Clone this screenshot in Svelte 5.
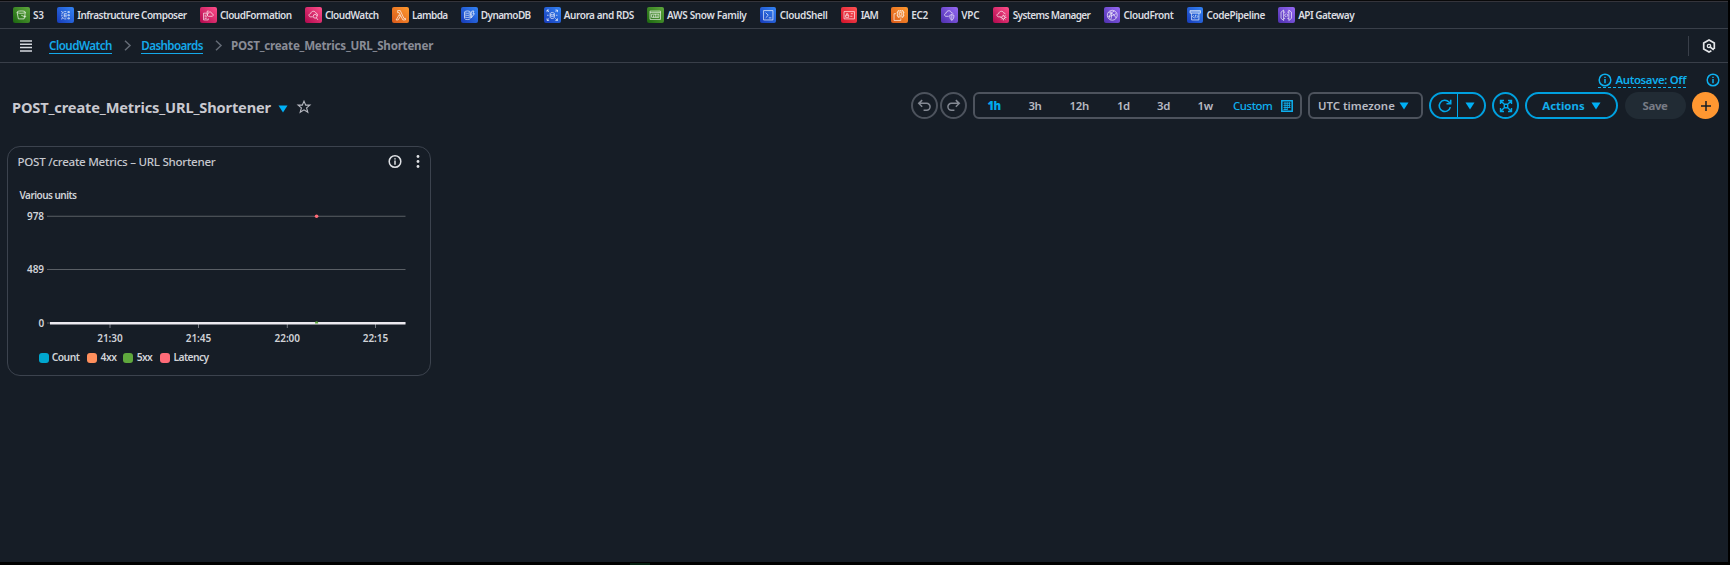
<script>
  const services = [
    ['S3', 11, 'green', 's3'],
    ['Infrastructure Composer', 109.4, 'blue', 'composer'],
    ['CloudFormation', 71.7, 'pink', 'formation'],
    ['CloudWatch', 53.7, 'pink', 'watch'],
    ['Lambda', 35.7, 'orange', 'lambda'],
    ['DynamoDB', 49.7, 'blue', 'dynamo'],
    ['Aurora and RDS', 70, 'blue', 'rds'],
    ['AWS Snow Family', 79.4, 'green', 'snow'],
    ['CloudShell', 47.7, 'blue', 'shell'],
    ['IAM', 17.2, 'red', 'iam'],
    ['EC2', 16.7, 'orange', 'ec2'],
    ['VPC', 18.2, 'purple', 'vpc'],
    ['Systems Manager', 77.7, 'pink', 'systems'],
    ['CloudFront', 49.7, 'purple', 'front'],
    ['CodePipeline', 58.3, 'blue', 'pipeline'],
    ['API Gateway', 56, 'purple', 'gateway']
  ];

  const glyphs = {
    s3: 'M4 6l2.5 13h11L20 6M4 6c0-3 16-3 16 0s-16 3-16 0M12 12l7 3c3 1 2-2 0-2',
    composer: 'M9 6H7v3M7 15v3h2M10 9v6h5M10 12h5M10 9h5M4 5h2M4 9h1M4 12h3M4 15h1M4 19h2M17 5h3v2h-3zM17 11h3v2h-3zM17 17h3v2h-3zM10 5h4M10 19h4',
    formation: 'M10 8H3v13h9v-3M5 12h3M5 15h5M5 18h4M10 13V4h3M12 14h8c3-2 1-5-1-5-1-5-7-4-7 0-3 1-2 4 0 5',
    watch: 'M11 15H6c-4-2-2-6 1-6 1-6 9-6 10-1 3 0 4 3 3 5M12 14a3.6 3.6 0 1 0 7.2 0a3.6 3.6 0 1 0-7.2 0M18 17l3 4',
    lambda: 'M7 3h5l7 15h3v3h-5L10 7H7zM10 11L4 21h4l4-7z',
    dynamo: 'M3 6c0-3 11-3 11 0s-11 3-11 0v12c0 3 11 3 11 0V6M3 10c0 3 11 3 11 0M3 14c0 3 11 3 11 0M17 4h4l-2 5h3l-6 8 1-6h-2z',
    rds: 'M8 9c0-3 8-3 8 0s-8 3-8 0v7c0 3 8 3 8 0V9M8 12c0 3 8 3 8 0M2 2l4 4M2 6V2h4M22 2l-4 4M18 2h4v4M2 22l4-4M2 18v4h4M22 22l-4-4M18 22h4v-4M2 12h3M19 12h3',
    snow: 'M2 4h20v16H2zM2 7h20M5 10h14v6H5zM12 10v6M8.5 12v4M15.5 12v4',
    shell: 'M3 3h18v18H3zM7 7l5 5-5 5M13 17h5',
    iam: 'M2 5h20v14H2zM5 12h6v4H5zM6.500 12V9h3v3M15 9h4M14 14h4',
    ec2: 'M9 4h11v11H9zM6 9H2v13h13v-4M12 7h5v5h-5zM11 2v2M14.500 2v2M18 2v2M20 7h2M20 12h2M11 15v2M18 15v2M7 7h2M7 12h2',
    vpc: 'M11 14H5c-4-2-1-6 1-6 1-6 9-6 10-1 2 0 3 1 3 2M13 12c2 0 3-1 4-2 1 1 2 2 4 2 0 5-1 8-4 10-3-2-4-5-4-10M17 11v10',
    systems: 'M11 15H6c-4-2-2-6 1-6 1-6 9-6 10-1 2 0 3 1 3 2M13 16a3 3 0 1 0 6 0a3 3 0 1 0-6 0M16 11v2M16 19v3M10 16h3M19 16h3M12 20l2-2M18 18l2 2M20 12l-2 2',
    front: 'M2.500 12a9.500 9.500 0 1 0 19 0a9.500 9.500 0 1 0-19 0M5 7c6 0 12 4 14 10M6 18c0-6 4-12 10-14M4 14c6 0 12-2 16-6M9 20c2-3 2-9 0-16',
    pipeline: 'M2 3h20v5H2zM5 8v13h14V8M2 5.500h20M9 12l-2 2.500L9 17M15 12l2 2.500L15 17M13 11l-2 7',
    gateway: 'M2 6l5-4v20l-5-4zM22 6l-5-4v20l5-4zM7 6h3M14 6h3M7 18h3M14 18h3M11 9l-2 3 2 3M13 9l2 3-2 3'
  };

  const ranges = [
    ['3h', 13, 28],
    ['12h', 19.5, 28],
    ['1d', 12.5, 27.5],
    ['3d', 13, 27.5],
    ['1w', 15.5, 20]
  ];

  const gridlines = [[978, 71.3, 17], [489, 124.5, 17], [0, 178, 5.5]];
  const ticks = [['21:30', 102], ['21:45', 190.5], ['22:00', 279.3], ['22:15', 367.5]];
  const legend = [
    ['Count', '#00a7cf', 27.5, 8],
    ['4xx', '#ff8f5c', 15.8, 7],
    ['5xx', '#5fa83d', 15.5, 8],
    ['Latency', '#ff6b78', 35, 0]
  ];

  // Spreads the letters so that a label fills its column exactly.
  function fit(node, width) {
    node.style.letterSpacing = '0px';
    const natural = node.getBoundingClientRect().width;
    node.style.letterSpacing = (width - natural) / node.textContent.length + 'px';
  }
</script>

{#snippet caret()}
  <svg class="caret" viewBox="0 0 10 8"><path d="M0.5 0.5h9L5 7.5z" fill="currentColor" /></svg>
{/snippet}

{#snippet info()}
  <svg class="info" viewBox="0 0 14 14" fill="none" stroke="currentColor" stroke-width="1.5">
    <circle cx="7" cy="7" r="5.8" /><path d="M7 6.1v4.1M7 3.7v1.4" />
  </svg>
{/snippet}

<div class="page">
  <nav class="services">
    {#each services as [name, width, tone, icon]}
      <div class="service">
        <span class="tile {tone}">
          <svg viewBox="0 0 24 24" fill="none" stroke="#fff" stroke-opacity="0.85" stroke-width="1.5"><path d={glyphs[icon]} /></svg>
        </span>
        <span class="label" style:width="{width}px"><span use:fit={width}>{name}</span></span>
      </div>
    {/each}
  </nav>

  <header class="crumbs">
    <svg class="menu" viewBox="0 0 12 12" stroke="#d5d9df" stroke-width="1.5"><path d="M0 1h12M0 4.3h12M0 7.600h12M0 10.900h12" /></svg>
    <a href="#cloudwatch"><span use:fit={63}>CloudWatch</span></a>
    <svg class="chevron" viewBox="0 0 7 11"><path d="M1 .7l5 4.8-5 4.8" /></svg>
    <a href="#dashboards"><span use:fit={61.5}>Dashboards</span></a>
    <svg class="chevron" viewBox="0 0 7 11"><path d="M1 .7l5 4.8-5 4.8" /></svg>
    <span class="current"><span use:fit={202}>POST_create_Metrics_URL_Shortener</span></span>
    <div class="corner">
      <svg viewBox="0 0 14 14" fill="none" stroke="#e3e5e8" stroke-width="1.7"><path d="M9.400 11.700L7 13 1.700 10V4L7 1l5.300 3v6M7.500 7.500l4.300 3.400" /><circle cx="7" cy="7" r="1.700" stroke-width="1.300" /></svg>
    </div>
  </header>

  <main>
    <section class="heading">
      <h1><span use:fit={259}>POST_create_Metrics_URL_Shortener</span></h1>
      <span class="cyan drop">{@render caret()}</span>
      <svg class="star" viewBox="0 0 14 14"><path d="M7 1.100l1.700 4h4.200L9.600 7.900l1.200 4.400L7 9.800l-3.800 2.500 1.200-4.400L1.100 5.100h4.200z" /></svg>
    </section>

    <section class="tools">
      <div class="autosave-row">
        <span class="autosave">{@render info()}<span use:fit={70.5}>Autosave: Off</span></span>
        {@render info()}
      </div>
      <div class="toolbar">
        <button class="round grey undo" aria-label="Undo">
          <svg viewBox="0 0 16 14"><path d="M5.500 1.200L1.800 4.700l3.700 3.600M2 4.700h8.300a3.700 3.700 0 0 1 0 7.400H7" /></svg>
        </button>
        <button class="round grey redo" aria-label="Redo">
          <svg viewBox="0 0 16 14"><path d="M10.500 1.200l3.700 3.500-3.700 3.600M14 4.700H5.700a3.700 3.700 0 0 0 0 7.400H9" /></svg>
        </button>
        <div class="segments">
          <b class="first"><span use:fit={13}>1h</span></b>
          {#each ranges as [text, width, gap]}
            <span class="range" style:width="{width}px" style:margin-right="{gap}px"><span use:fit={width}>{text}</span></span>
          {/each}
          <span class="custom"><span use:fit={39.5}>Custom</span></span>
          <svg class="calendar" viewBox="0 0 12 12"><path d="M.8.8h10.400v10.400H.8z" /><path d="M2.500 3.200h7M2.500 5.400h7M2.500 7.500h7M2.500 9.500h4M4 2.200v8M6.200 2.200v8M8.400 2.200v5.600" stroke-width="0.9" /></svg>
        </div>
        <button class="zone"><span use:fit={73}>UTC timezone</span>{@render caret()}</button>
        <div class="refresh">
          <svg class="reload" viewBox="0 0 14 14"><path d="M12.300 8.100A5.600 5.600 0 1 1 10.900 3l1.700 1.600M12.700.7v4.100H8.500" /></svg>
          <span class="split">{@render caret()}</span>
        </div>
        <button class="round expand" aria-label="Full screen">
          <svg viewBox="0 0 14 14"><path d="M1.500 5V1.500H5M9 1.500h3.500V5M12.500 9v3.500H9M5 12.500H1.500V9M1.700 1.700l3.800 3.800M12.300 1.700L8.500 5.500M12.300 12.300L8.500 8.500M1.700 12.300l3.800-3.800M5.300 5.300h3.400v3.400H5.300z" /></svg>
        </button>
        <button class="actions"><span use:fit={40.5}>Actions</span>{@render caret()}</button>
        <button class="save"><span use:fit={25}>Save</span></button>
        <button class="add" aria-label="Add widget">
          <svg viewBox="0 0 10 10"><path d="M5 0v10M0 5h10" /></svg>
        </button>
      </div>
    </section>

    <article class="widget">
      <div class="widget-head">
        <h2><span use:fit={198}>POST /create Metrics – URL Shortener</span></h2>
        {@render info()}
        <svg class="dots" viewBox="0 0 4 14" fill="#dfe1e5"><circle cx="2" cy="2" r="1.400" /><circle cx="2" cy="7" r="1.400" /><circle cx="2" cy="12" r="1.400" /></svg>
      </div>
      <svg class="chart" viewBox="0 32 424 170">
        <text x="11.500" y="53.500" textLength="57.500">Various units</text>
        {#each gridlines as [value, y, width]}
          <text x={36 - width} y={y + 3.700} textLength={width}>{value}</text>
          <line x1="39" x2="397.500" y1={y} y2={y} stroke="#5a5f65" stroke-width="1.100" />
        {/each}
        {#each ticks as [time, x]}
          <line x1={x} x2={x} y1="178" y2="183" stroke="#767b82" />
          <text x={x - 12.700} y="197" textLength="25.400">{time}</text>
        {/each}
        <line x1="42" x2="397.500" y1="178.300" y2="178.300" stroke="#eceaf0" stroke-width="2.500" />
        <circle cx="308.600" cy="71.300" r="1.800" fill="#ff6b78" />
        <path d="M307 178.400v-.5a1.600 1.600 0 0 1 3.200 0v.5z" fill="#5fa83d" />
      </svg>
      <div class="legend">
        {#each legend as [name, color, width, gap]}
          <span class="key" style:margin-right="{gap}px">
            <i style:background={color}></i><span style:width="{width}px"><span use:fit={width}>{name}</span></span>
          </span>
        {/each}
      </div>
    </article>
  </main>
  <div class="edge"></div>
</div>

<style>
  :global(body) { background: #000; }
  .page {
    width: 1728px; height: 565px; box-sizing: border-box; overflow: hidden;
    display: flex; flex-direction: column; background: #161d26; color: #c6c6cd;
    border-top: 1px solid #09090a; font-family: "Noto Sans", "Open Sans", sans-serif;
  }
  span { white-space: nowrap; }
  span > span { display: inline-block; }
  button {
    font: inherit; margin: 0; padding: 0; background: none; color: inherit; box-sizing: border-box;
    display: flex; align-items: center; justify-content: center; flex: none;
  }
  svg { flex: none; display: block; overflow: visible; }

  .services {
    flex: none; height: 28px; box-sizing: border-box; padding-left: 13px;
    border-top: 1px solid #34343b; border-bottom: 1px solid #393f49;
    display: flex; align-items: center;
  }
  .service { display: flex; align-items: center; gap: 3.3px; margin-right: 13.3px; flex: none; }
  .label { flex: none; font-size: 10px; line-height: 14px; font-weight: 600; color: #dcdde1; }
  .tile { width: 16.7px; height: 16.7px; border-radius: 2px; display: grid; place-items: center; }
  .tile svg { width: 12.5px; height: 12.5px; }
  .green { background: linear-gradient(45deg, #1b660f, #5fa83d); }
  .blue { background: linear-gradient(45deg, #173bb8, #3384f5); }
  .pink { background: linear-gradient(45deg, #b0084d, #ff4f8b); }
  .orange { background: linear-gradient(45deg, #d9591a, #ff9a2f); }
  .red { background: linear-gradient(45deg, #d2122b, #ff5252); }
  .purple { background: linear-gradient(45deg, #4d2fae, #976af5); }

  .crumbs {
    flex: none; height: 34px; box-sizing: border-box; padding-left: 20px;
    border-bottom: 1px solid #393f49; display: flex; align-items: center; font-size: 11.6px; line-height: 15px;
  }
  .menu { width: 12px; height: 12px; margin-right: 17px; }
  .crumbs a {
    color: #14a9ea; font-weight: 600; text-decoration: none; border-bottom: 1px solid #14a9ea;
    height: 15px;
  }
  .chevron { width: 7px; height: 11px; margin: 0 10.3px 0 12px; fill: none; stroke: #646b76; stroke-width: 1.5; }
  .current { color: #898c96; font-weight: 700; margin-left: -1px; }
  .corner {
    margin-left: auto; width: 39px; height: 20px; border-left: 1px solid #393f49;
    display: grid; place-items: center;
  }
  .corner svg { width: 14px; height: 14px; }

  main {
    flex: 1; min-height: 0; display: grid; grid-template-columns: 430px 1fr;
    grid-template-rows: 83px 1fr; font-size: 11.4px;
  }
  .heading { display: flex; align-items: center; padding: 7px 0 0 12px; height: 74px; }
  h1 { margin: 0; font-size: 14.6px; line-height: 20px; font-weight: 700; color: #c9c9d0; width: 266px; white-space: nowrap; }
  h1 span, h2 span { display: inline-block; }
  .caret { width: 10px; height: 8px; color: #00b0f5; }
  .cyan { color: #00b0f5; }
  .star { width: 14px; height: 14px; margin: 0 0 0 9px; fill: none; stroke: #b8bac2; stroke-width: 1.1; }
  .drop { margin-top: 3px; }

  .tools { display: flex; flex-direction: column; align-items: flex-end; padding: 9px 9px 0 0; }
  .autosave-row { display: flex; height: 17px; gap: 20px; color: #0eb0ef; margin-right: -1px; }
  .autosave { display: flex; gap: 3px; height: 15px; line-height: 16px; border-bottom: 1px dashed #0eb0ef; font-weight: 600; }
  .info { width: 14px; height: 14px; margin-top: 1px; }
  .toolbar { display: flex; align-items: center; height: 27px; margin-top: 3px; line-height: 15px; }
  .round { width: 27px; height: 27px; border: 2px solid #00a0df; border-radius: 50%; }
  .round svg { width: 14px; height: 14px; fill: none; stroke: #00a9eb; stroke-width: 1.4; }
  .grey { border-color: #4d535d; }
  .grey svg { stroke: #858a94; stroke-width: 1.6; width: 15px; height: 13px; }
  .undo { margin-right: 2px; }
  .redo { margin-right: 6.5px; }
  .segments, .zone { border: 2px solid #4d535d; border-radius: 6px; height: 27px; box-sizing: border-box; }
  .segments { width: 329px; display: flex; align-items: center; padding-left: 12.5px; margin-right: 6px; font-weight: 600; color: #b8bac2; }
  .first { color: #00a9eb; width: 13px; margin-right: 28px; }
  .first span { display: inline-block; }
  .range, .custom { flex: none; }
  .custom { width: 40px; margin-right: 8px; color: #0eb0ef; font-weight: 500; }
  .calendar { width: 12px; height: 12px; fill: none; stroke: #0eb0ef; stroke-width: 1.5; }
  .zone { width: 115px; gap: 8px; margin-right: 6px; font-weight: 600; color: #b8bac2; padding-right: 4px; }
  .zone span, .actions span, .save span { display: inline-block; }
  .zone span { width: 73px; }
  .refresh {
    width: 57px; height: 27px; box-sizing: border-box; border: 2px solid #00a0df; border-radius: 14px;
    display: flex; align-items: center; margin-right: 6px;
  }
  .reload { width: 14px; height: 14px; margin: 0 5px 0 7px; fill: none; stroke: #00a9eb; stroke-width: 1.6; }
  .split { height: 100%; flex: 1; border-left: 1px solid #00a9eb; display: flex; align-items: center; padding-left: 7px; }
  .expand { margin-right: 6px; }
  .actions { width: 93px; height: 27px; border: 2px solid #00a0df; border-radius: 14px; color: #12adec; font-weight: 700; gap: 8px; margin-right: 6.5px; }
  .actions span { width: 40.5px; }
  .save { width: 61px; height: 27px; border: 0; border-radius: 14px; background: #212b34; color: #777b85; font-weight: 700; margin-right: 6.5px; }
  .add { width: 27px; height: 27px; border: 0; border-radius: 50%; background: #ff9731; }
  .add svg { width: 10px; height: 10px; stroke: #161d26; stroke-width: 1.5; }

  .widget {
    margin-left: 7px; width: 424px; height: 230px; box-sizing: border-box; border: 1px solid #3c434e;
    border-radius: 13px; display: flex; flex-direction: column; color: #dfe1e5;
  }
  .widget-head { display: flex; flex: none; height: 30px; padding: 0 10px 0 9.5px; align-items: center; }
  .widget-head > * { transform: translateY(-0.5px); }
  h2 { margin: 0 auto 0 0; font-size: 11.6px; line-height: 16px; font-weight: 500; color: #c6c8ce; width: 200px; white-space: nowrap; }
  .widget-head .info { margin: 0 14px 0 0; }
  .dots { width: 4px; height: 14px; }
  .chart { width: 424px; height: 170px; }
  .chart text { font-size: 10px; font-weight: 600; fill: #d0d2d7; }
  .legend { display: flex; padding-left: 30.5px; margin-top: 4px; font-size: 10.3px; line-height: 13px; font-weight: 600; color: #d0d2d7; }
  .key { display: flex; gap: 3.3px; align-items: center; }
  .key i { width: 10px; height: 10px; border-radius: 3px; }
  .edge { flex: none; height: 3px; background: linear-gradient(#062011, #062011) no-repeat 630px 1px / 20px 2px, #000; }
</style>
